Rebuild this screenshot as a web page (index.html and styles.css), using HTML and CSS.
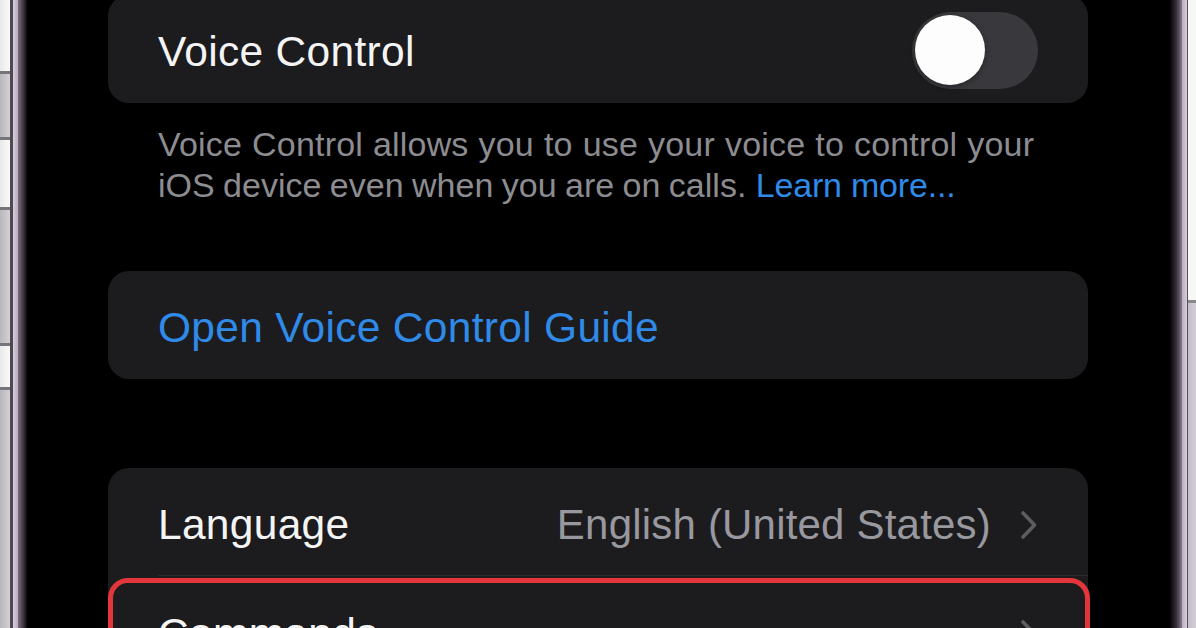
FILE: index.html
```html
<!DOCTYPE html>
<html lang="en">
<head>
<meta charset="utf-8">
<title>Voice Control</title>
<link rel="stylesheet" href="styles.css">
</head>
<body>
<div class="device">
  <div class="bezel bezel-left">
    <div class="strip">
      <span class="seg seg-light s1"></span>
      <span class="seg seg-grey s2"></span>
      <span class="seg seg-light s3"></span>
      <span class="seg seg-grey s4"></span>
      <span class="seg seg-light s5"></span>
      <span class="seg seg-grey s6"></span>
    </div>
    <div class="edge-line"></div>
    <div class="rim"></div>
    <div class="rim-shade"></div>
  </div>

  <main class="screen">
    <section class="card card-first">
      <div class="row">
        <span class="label">Voice Control</span>
        <span class="switch"><span class="knob"></span></span>
      </div>
    </section>

    <p class="footer"><span class="footer-l1">Voice Control allows you to use your voice to control your</span><br><span class="footer-l2">iOS device even when you are on calls.</span> <span class="footer-link">Learn more...</span></p>

    <section class="card card-guide">
      <div class="row">
        <span class="link">Open Voice Control Guide</span>
      </div>
    </section>

    <section class="card card-list">
      <div class="row row-sep">
        <span class="label">Language</span>
        <span class="trail">
          <span class="value">English (United States)</span>
          <svg class="chevron" width="18" height="30" viewBox="0 0 18 30"><path d="M3 3 L14.5 15 L3 27" fill="none" stroke="#5c5c61" stroke-width="3.6" stroke-linecap="round" stroke-linejoin="round"/></svg>
        </span>
      </div>
      <div class="row row-highlight">
        <span class="label">Commands</span>
        <svg class="chevron" width="18" height="30" viewBox="0 0 18 30"><path d="M3 3 L14.5 15 L3 27" fill="none" stroke="#5c5c61" stroke-width="3.6" stroke-linecap="round" stroke-linejoin="round"/></svg>
        <span class="highlight"></span>
      </div>
    </section>
  </main>

  <div class="bezel bezel-right">
    <div class="rim-shade-r"></div>
    <div class="rim-r"></div>
    <div class="edge-line-r"></div>
    <div class="strip-r">
      <span class="seg-r-light"></span>
      <span class="seg-r-grey"></span>
    </div>
  </div>
</div>
</body>
</html>
```

FILE: styles.css
```css
* { box-sizing: border-box; }

html, body {
  margin: 0;
  padding: 0;
  background: #000;
  width: 1196px;
  height: 628px;
  overflow: hidden;
}

.device {
  display: flex;
  width: 1196px;
  height: 628px;
  overflow: hidden;
  background: #000;
  font-family: "Liberation Sans", Arial, sans-serif;
}

/* ---------- bezels ---------- */
.bezel {
  display: flex;
  height: 628px;
  flex: none;
}
.bezel-left { width: 27px; }
.bezel-right { width: 26px; }

.strip {
  width: 10px;
  display: flex;
  flex-direction: column;
}
.seg { display: block; border-bottom: 3px solid #77757b; }
.seg-light { background: linear-gradient(90deg, #e9e9ea, #fbfbfb); }
.seg-grey { background: linear-gradient(90deg, #b9b7bd, #d3d1d6); }
.s1 { height: 74px; }
.s2 { height: 66px; }
.s3 { height: 70px; }
.s4 { height: 136px; }
.s5 { height: 44px; }
.s6 { flex: 1; border-bottom: 0; }

.edge-line { width: 3px; background: #4d4a52; }
.rim { width: 5px; background: linear-gradient(90deg, #d9d0dc, #b8abbd); }
.rim-shade { width: 9px; background: linear-gradient(90deg, #7c6e80, #3d3441 60%, #0b090c); }

.rim-shade-r { width: 12px; background: linear-gradient(90deg, #050405, #3a323e 55%, #867a8a); }
.rim-r { width: 5px; background: linear-gradient(90deg, #b9adbf, #d6cdda); }
.edge-line-r { width: 1px; background: #555159; }
.strip-r {
  width: 8px;
  display: flex;
  flex-direction: column;
}
.seg-r-light { height: 303px; background: #f7f7f8; border-bottom: 3px solid #8a878e; }
.seg-r-grey { flex: 1; background: linear-gradient(90deg, #c3bec8, #d2ced6); }

/* ---------- screen ---------- */
.screen {
  flex: 1;
  display: flex;
  flex-direction: column;
  padding: 0 82px 0 81px;
}

.card {
  background: #1c1c1e;
  border-radius: 21px;
}
.card-first { margin-top: -5px; }
.card-guide { margin-top: 65px; }
.card-list {
  margin-top: 89px;
  flex: 1;
  border-bottom-left-radius: 0;
  border-bottom-right-radius: 0;
}

.row {
  position: relative;
  height: 108px;
  display: flex;
  align-items: center;
  justify-content: space-between;
  padding: 0 50px;
}

.row-sep::after {
  content: "";
  position: absolute;
  left: 50px;
  right: 0;
  bottom: 0;
  height: 1px;
  background: #2c2c2f;
}

.label {
  color: #f4f4f5;
  font-size: 42.5px;
  letter-spacing: 0.3px;
  padding-top: 5px;
}

.row-highlight .label { padding-top: 7px; }

.link {
  color: #2f8ae8;
  font-size: 42.5px;
  letter-spacing: 0.3px;
  padding-top: 5px;
}

.trail {
  display: flex;
  align-items: center;
  gap: 29px;
  padding-top: 6px;
}

.value {
  color: #98989e;
  font-size: 42px;
  letter-spacing: 0.2px;
}

.chevron { display: block; flex: none; }
.row-highlight .chevron { margin-top: 8px; }

/* switch */
.switch {
  width: 126px;
  height: 77px;
  border-radius: 39px;
  background: #39393d;
  display: flex;
  align-items: center;
  padding-left: 3px;
  margin-top: 2px;
}
.knob {
  width: 70px;
  height: 70px;
  border-radius: 50%;
  background: #fdfdfd;
  box-shadow: 0 2px 6px rgba(0,0,0,0.35);
}

/* footer text */
.footer {
  margin: 0;
  padding: 21px 40px 0 50px;
  color: #8c8c91;
  font-size: 34px;
  line-height: 41px;
  white-space: nowrap;
}
.footer-l1 { letter-spacing: 0.18px; word-spacing: 0.4px; }
.footer-l2 { letter-spacing: 0; word-spacing: -1px; }
.footer-link { color: #2f8ae8; letter-spacing: -0.2px; }

/* red annotation */
.highlight {
  position: absolute;
  left: 0;
  right: -2px;
  top: 2px;
  height: 160px;
  border: 5px solid #e3363c;
  border-radius: 20px;
  pointer-events: none;
}
```
